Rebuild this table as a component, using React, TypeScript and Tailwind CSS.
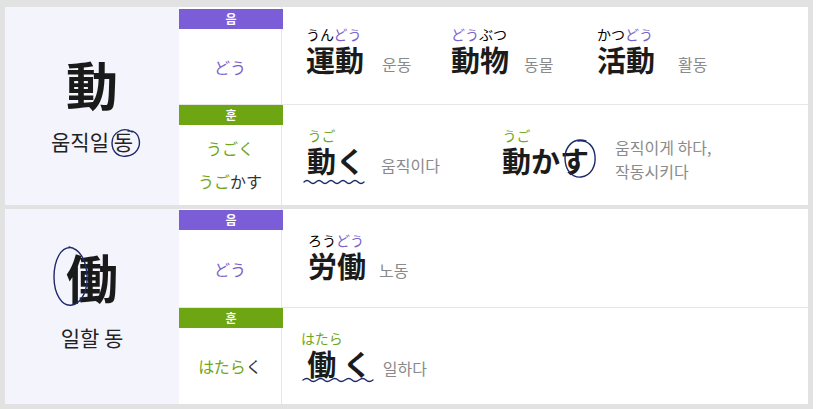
import React from 'react';

const JP = "font-['Noto_Sans_CJK_JP','Noto_Sans_CJK_KR',sans-serif]";
const KR = "font-['Noto_Sans_CJK_KR','Noto_Sans_CJK_JP',sans-serif]";

// 후리가나 + 한자 (한자 위 가운데)
const Ruby: React.FC<{ rt: React.ReactNode; base: string }> = ({ rt, base }) => (
  <span className="inline-flex flex-col items-center">
    <span className="text-[14px] leading-[16px] whitespace-nowrap">{rt}</span>
    <span className="text-[29px] leading-[34px] font-bold text-[#1b1b1b]">{base}</span>
  </span>
);

const Word: React.FC<{ rt: React.ReactNode; base: string }> = ({ rt, base }) => (
  <span className="inline-flex flex-col items-start">
    <span className="text-[14px] leading-[16px] whitespace-nowrap">{rt}</span>
    <span className="text-[29px] leading-[34px] font-bold text-[#1b1b1b]">{base}</span>
  </span>
);

const P = ({ children }: { children: React.ReactNode }) => <span className="text-[#7a62cb]">{children}</span>;
const G = ({ children }: { children: React.ReactNode }) => <span className="text-[#6fa820]">{children}</span>;

const Meaning: React.FC<{ children: React.ReactNode; className?: string }> = ({ children, className }) => (
  <span className={`${KR} text-[16px] leading-[24px] text-[#8a8a8a] ${className ?? ''}`}>{children}</span>
);

const Header: React.FC<{ label: string; green?: boolean; className?: string }> = ({ label, green, className }) => (
  <div
    className={`${KR} h-[20px] mr-[-2px] flex items-center justify-center text-white text-[12px] font-bold ${
      green ? 'bg-[#6ea512]' : 'bg-[#7b5dd7]'
    } ${className ?? ''}`}
  >
    {label}
  </div>
);

export default function App() {
  return (
    <div className={`relative w-[817px] h-[409px] bg-white ${JP}`}>
      <div className="w-[813px] h-[409px] border-t-[7px] border-x-[5px] border-b-[5px] border-[#e2e2e2] flex flex-col">
        {/* 動 */}
        <div className="h-[198px] flex">
          <div className="w-[174px] bg-[#f4f4fc] flex flex-col items-center justify-center gap-[17px]">
            <span className="text-[52px] leading-none font-bold text-[#1a1a1a]">動</span>
            <span className={`${KR} text-[21px] leading-[28px] text-[#222]`}>움직일 동</span>
          </div>
          <div className="flex-1 flex flex-col">
            <div className="h-[98px] flex border-b border-[#e6e6e6]">
              <div className="w-[103px] border-r border-[#e6e6e6] flex flex-col">
                <Header label="음" className="mt-[2px]" />
                <div className="flex-1 flex items-center justify-center text-[16px] text-[#7a62cb]">どう</div>
              </div>
              <div className="flex-1 flex items-start pl-[24px] pt-[19px]">
                <div className="w-[145px] flex items-end">
                  <Word rt={<>うん<P>どう</P></>} base="運動" />
                  <Meaning className="ml-[18px]">운동</Meaning>
                </div>
                <div className="w-[146px] flex items-end">
                  <Word rt={<><P>どう</P>ぶつ</>} base="動物" />
                  <Meaning className="ml-[15px]">동물</Meaning>
                </div>
                <div className="flex items-end">
                  <Word rt={<>かつ<P>どう</P></>} base="活動" />
                  <Meaning className="ml-[23px]">활동</Meaning>
                </div>
              </div>
            </div>
            <div className="flex-1 flex">
              <div className="w-[103px] border-r border-[#e6e6e6] flex flex-col">
                <Header label="훈" green />
                <div className="flex-1 flex flex-col items-center justify-center text-[16px] leading-[33px] text-[#333]">
                  <G>うごく</G>
                  <span><G>うご</G>かす</span>
                </div>
              </div>
              <div className="flex-1 flex items-start pl-[25px] pt-[22px]">
                <div className="w-[195px] flex items-end">
                  <Ruby rt={<G>うご</G>} base="動" />
                  <span className="text-[29px] leading-[34px] font-bold text-[#1b1b1b]">く</span>
                  <Meaning className="ml-[16px]">움직이다</Meaning>
                </div>
                <div className="flex items-end">
                  <Ruby rt={<G>うご</G>} base="動" />
                  <span className="text-[29px] leading-[34px] font-bold text-[#1b1b1b]">かす</span>
                  <Meaning className="ml-[26px] leading-[22px] mb-[-6px]">
                    움직이게 하다,
                    <br />
                    작동시키다
                  </Meaning>
                </div>
              </div>
            </div>
          </div>
        </div>

        <div className="h-[4px] bg-[#e2e2e2]" />

        {/* 働 */}
        <div className="flex-1 flex">
          <div className="w-[174px] bg-[#f4f4fc] flex flex-col items-center justify-center gap-[20px] pb-[12px]">
            <span className="text-[52px] leading-none font-bold text-[#1a1a1a]">働</span>
            <span className={`${KR} text-[21px] leading-[28px] text-[#222]`}>일할 동</span>
          </div>
          <div className="flex-1 flex flex-col">
            <div className="h-[99px] flex border-b border-[#e6e6e6]">
              <div className="w-[103px] border-r border-[#e6e6e6] flex flex-col">
                <Header label="음" className="mt-[1px]" />
                <div className="flex-1 flex items-center justify-center text-[16px] text-[#7a62cb]">どう</div>
              </div>
              <div className="flex-1 flex items-start pl-[26px] pt-[23px]">
                <div className="flex items-end">
                  <Word rt={<>ろう<P>どう</P></>} base="労働" />
                  <Meaning className="ml-[13px]">노동</Meaning>
                </div>
              </div>
            </div>
            <div className="flex-1 flex">
              <div className="w-[103px] border-r border-[#e6e6e6] flex flex-col">
                <Header label="훈" green />
                <div className="flex-1 flex items-center justify-center text-[16px] text-[#333]">
                  <span><G>はたら</G>く</span>
                </div>
              </div>
              <div className="flex-1 flex items-start pl-[19px] pt-[22px]">
                <div className="flex items-end">
                  <Ruby rt={<G>はたら</G>} base="働" />
                  <span className="text-[29px] leading-[34px] font-bold text-[#1b1b1b]">く</span>
                  <Meaning className="ml-[11px]">일하다</Meaning>
                </div>
              </div>
            </div>
          </div>
        </div>
      </div>

      {/* 손글씨 표시 */}
      <svg className="absolute inset-0 pointer-events-none" width="817" height="409" fill="none" stroke="#1d2a6a" strokeWidth="1.4" strokeLinecap="round">
        <path d="M132 132 C 123 126, 112 133, 112 143 C 112 152, 119 158, 127 156 C 136 155, 141 147, 139 139 C 138 134, 134 130, 128 131" />
        <path d="M73 248 C 60 245, 54 262, 54 277 C 54 294, 62 307, 72 305 C 82 303, 88 290, 87 275 C 86 260, 80 249, 69 247" />
        <path d="M586 141 C 573 137, 565 147, 565 158 C 565 170, 572 178, 581 177 C 591 176, 596 166, 595 156 C 594 146, 588 140, 578 141" />
        <path d="M304 182 q 3 -3 6 0 t 6 0 t 6 0 t 6 0 t 6 0 t 6 0 t 6 0 t 6 0 t 6 0 t 6 0" />
        <path d="M303 380 q 4 -3 7 0 t 7 0 t 7 0 t 7 0 t 7 0 t 7 0 t 7 0 t 7 0 t 7 0 t 7 0" />
      </svg>
    </div>
  );
}
